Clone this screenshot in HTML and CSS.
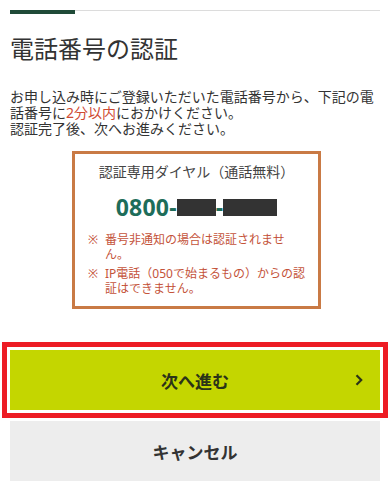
FILE: index.html
```html
<!DOCTYPE html>
<html lang="ja">
<head>
<meta charset="utf-8">
<title>電話番号の認証</title>
<link rel="stylesheet" href="styles.css">
</head>
<body>
<div class="page">
  <div class="progress"><div class="progress-fill"></div></div>
  <h1 class="title">電話番号の認証</h1>
  <p class="lead">お申し込み時にご登録いただいた電話番号から、下記の電話番号に<span class="em">2分以内</span>におかけください。<br>認証完了後、次へお進みください。</p>
  <div class="dial-box">
    <div class="dial-head">認証専用ダイヤル（通話無料）</div>
    <div class="dial-num">0800-<span class="mask m1"></span>-<span class="mask m2"></span></div>
    <ul class="notes">
      <li><span class="mark">※</span><span class="note-text">番号非通知の場合は認証されません。</span></li>
      <li><span class="mark">※</span><span class="note-text">IP電話（050で始まるもの）からの認証はできません。</span></li>
    </ul>
  </div>
  <div class="actions">
    <button class="btn btn-next" type="button">
      <span class="btn-label">次へ進む</span>
      <svg class="chev" viewBox="0 0 8 12" width="8" height="12" aria-hidden="true"><path d="M1.5 1.3 L6.2 6 L1.5 10.7" fill="none" stroke="#2a3318" stroke-width="2.2"/></svg>
    </button>
    <button class="btn btn-cancel" type="button"><span class="btn-label">キャンセル</span></button>
  </div>
</div>
</body>
</html>
```
FILE: styles.css
```css
* { box-sizing: border-box; }
html, body { margin: 0; padding: 0; background: #fff; }
body {
  font-family: "Noto Sans", "Noto Sans CJK JP", sans-serif;
  color: #333;
}
.page { padding: 10px 10px 0; }

.progress {
  height: 4px;
  border-top: 1px solid #dcdcdc;
  position: relative;
}
.progress-fill {
  width: 65px;
  height: 4px;
  margin-top: -1px;
  background: #1f4a38;
}

.title {
  margin: 17px 0 0;
  font-size: 24px;
  line-height: 36px;
  font-weight: 400;
  color: #333;
}

.lead {
  margin: 22px 0 0;
  font-size: 14px;
  line-height: 16px;
  color: #333;
}
.lead .em { color: #cf4a33; }

.dial-box {
  margin: 14px 0 0 62px;
  width: 249px;
  height: 158px;
  border: 3px solid #c97a45;
  padding: 8px 13px 0;
}
.dial-head {
  text-align: center;
  font-size: 14px;
  line-height: 20px;
  color: #444;
}
.dial-num {
  margin-top: 10px;
  text-align: center;
  font-size: 23px;
  line-height: 30px;
  font-weight: 700;
  color: #1e6d5a;
  letter-spacing: 0.2px;
}
.mask {
  display: inline-block;
  height: 17px;
  background: #333;
  vertical-align: baseline;
}
.m1 { width: 39px; }
.m2 { width: 54px; }

.notes {
  list-style: none;
  margin: 10px 0 0;
  padding: 0;
  color: #c4533a;
  font-size: 12px;
  line-height: 15px;
}
.notes li {
  display: flex;
  margin-bottom: 4px;
}
.mark {
  flex: 0 0 17px;
  color: #c4533a;
}
.note-text { flex: 1; min-width: 0; }

.actions {
  margin-top: 41px;
  display: flex;
  flex-direction: column;
  gap: 11px;
}
.btn {
  display: grid;
  grid-template-columns: 1fr auto 1fr;
  align-items: center;
  width: 370px;
  height: 60px;
  border: 0;
  padding: 0 17px;
  font-family: "Noto Sans", "Noto Sans CJK JP", sans-serif;
  font-size: 17px;
  font-weight: 700;
  cursor: pointer;
}
.btn-label { grid-column: 2; }
.btn-next {
  background: #c4d600;
  color: #2a3318;
  outline: 5px solid #ed1c24;
  outline-offset: 3px;
}
.chev {
  grid-column: 3;
  justify-self: end;
  display: block;
  width: 8px;
  height: 12px;
}
.btn-cancel {
  background: #ededed;
  color: #333;
}
```
